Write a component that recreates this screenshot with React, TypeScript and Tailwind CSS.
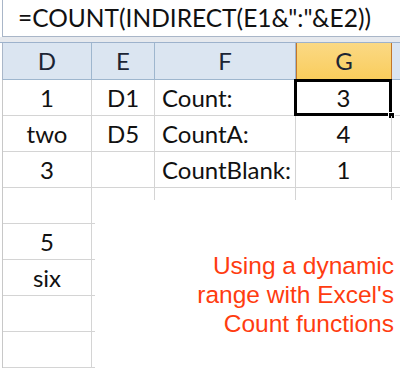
import React from "react";

const cols = ["w-[89px]", "w-[63px]", "w-[141px]", "w-[96px]"];

function Cell({
  w,
  children,
  align = "center",
  className = "",
}: {
  w: string;
  children?: React.ReactNode;
  align?: "center" | "left";
  className?: string;
}) {
  return (
    <div
      className={`${w} h-full shrink-0 border-r border-b border-[#d4d4d4] flex items-center ${
        align === "center" ? "justify-center" : "justify-start pl-[7px]"
      } ${className}`}
    >
      {children}
    </div>
  );
}

export default function App() {
  const rows: [string, string, string, string][] = [
    ["1", "D1", "Count:", "3"],
    ["two", "D5", "CountA:", "4"],
    ["3", "", "CountBlank:", "1"],
    ["", "", "", ""],
    ["5", "", "", ""],
    ["six", "", "", ""],
    ["", "", "", ""],
    ["", "", "", ""],
  ];
  return (
    <div
      className="relative w-[400px] h-[370px] overflow-hidden bg-white text-[#111]"
      style={{ fontFamily: "Lato, 'Open Sans', sans-serif" }}
    >
      {/* formula bar */}
      <div className="h-[37px] ml-[2px] border-l border-b border-[#a9b6c8] flex items-center pl-[15px] text-[24.5px] leading-none">
        =COUNT(INDIRECT(E1&amp;":"&amp;E2))
      </div>
      <div className="h-[6px] bg-[#e6e9ee] border-b border-[#9db2cc]" />
      {/* header */}
      <div className="flex h-[37px] ml-[2px] border-l border-[#a9b6c8] text-[24px] text-[#1c2434]">
        {["D", "E", "F"].map((c, i) => (
          <div
            key={c}
            className={`${cols[i]} h-full shrink-0 flex items-center justify-center bg-[#dbe5f1] border-r border-b border-[#9eb6ce]`}
          >
            {c}
          </div>
        ))}
        <div className="w-[96px] h-full shrink-0 flex items-center justify-center bg-gradient-to-b from-[#fbd984] to-[#f9cd5c] border-l border-[#c2762b] border-r border-b border-r-[#c2762b] border-b-[#c2762b]">
          G
        </div>
        <div className="flex-1 h-full bg-[#dbe5f1] border-b border-[#9eb6ce]" />
      </div>
      {/* body */}
      <div className="ml-[2px] border-l border-[#c8c8c8] text-[24px]">
        {rows.map((r, ri) => (
          <div key={ri} className="flex h-[36px]">
            <Cell w={cols[0]}>{r[0]}</Cell>
            <Cell w={cols[1]}>{r[1]}</Cell>
            <Cell w={cols[2]} align="left">
              {r[2]}
            </Cell>
            <Cell w={cols[3]} className="relative">
              {r[3]}
              {ri === 0 && (
                <div className="absolute left-[-2px] top-[-1px] right-[-1px] bottom-[-1px] border-[3px] border-black pointer-events-none">
                  <div className="absolute right-[-6px] bottom-[-6px] w-[7px] h-[7px] bg-black border border-white" />
                </div>
              )}
            </Cell>
            <div className="flex-1 h-full border-b border-[#d4d4d4]" />
          </div>
        ))}
      </div>
      {/* text box overlay */}
      <div
        className="absolute left-[95px] top-[200px] right-0 bottom-0 bg-white flex flex-col items-end pr-[6px] pt-[51px] text-[#ff3c10] text-[24.5px] leading-[29px]"
        style={{ fontFamily: "'Liberation Sans', Arial, sans-serif" }}
      >
        <div>Using a dynamic</div>
        <div>range with Excel's</div>
        <div>Count functions</div>
      </div>
    </div>
  );
}
